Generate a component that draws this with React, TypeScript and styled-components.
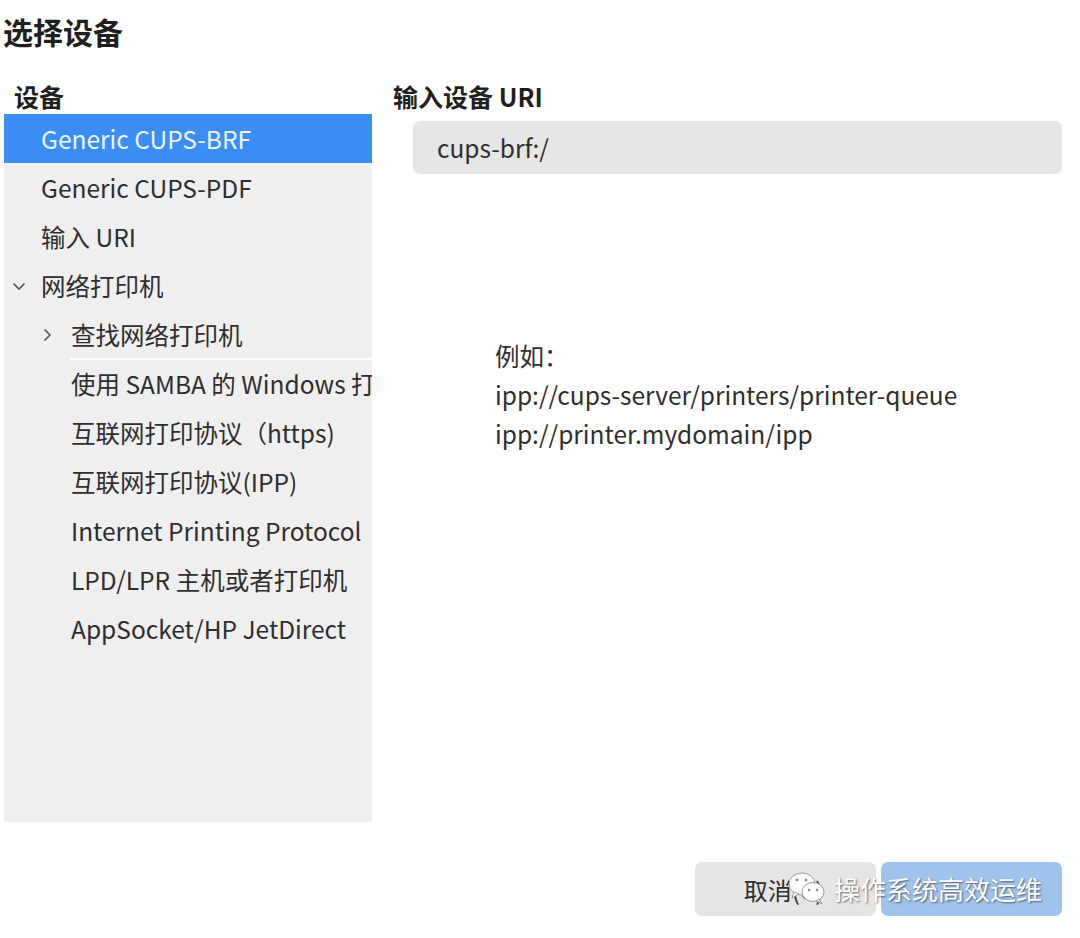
import * as React from "react";
import styled, { createGlobalStyle } from "styled-components";

const GlobalStyle = createGlobalStyle`
    html, body {
        margin: 0;
        padding: 0;
        background: #ffffff;
    }
    body {
        font-family: "Noto Sans CJK SC", "Noto Sans", sans-serif;
        color: #2e2e2e;
    }
`;

const Window = styled.div`
    width: 1080px;
    height: 938px;
    box-sizing: border-box;
    padding: 9px 18px 0 3px;
    display: flex;
    flex-direction: column;
    position: relative;
`;

const Title = styled.h1`
    margin: 0;
    font-size: 30px;
    font-weight: 700;
    line-height: 44px;
    color: #1f1f1f;
`;

const Body = styled.div`
    display: grid;
    grid-template-columns: 368px 1fr;
    column-gap: 21px;
    margin-top: 26px;
    margin-left: 1px;
`;

const Column = styled.div`
    display: flex;
    flex-direction: column;
`;

const SectionLabel = styled.div<{ $indent?: number }>`
    font-size: 25px;
    font-weight: 700;
    line-height: 35px;
    padding-left: ${(p) => p.$indent ?? 0}px;
    color: #1f1f1f;
`;

const ListPanel = styled.div`
    background: #efefef;
    height: 708px;
    overflow: hidden;
    display: flex;
    flex-direction: column;
`;

const Row = styled.div<{ $selected?: boolean; $depth: number }>`
    height: 49px;
    flex: none;
    display: flex;
    align-items: center;
    padding-left: ${(p) => 8 + p.$depth * 30}px;
    font-size: 24.5px;
    white-space: nowrap;
    background: ${(p) => (p.$selected ? "#3a8ef6" : "transparent")};
    color: ${(p) => (p.$selected ? "#eef5ff" : "#2e2e2e")};
`;

const Expander = styled.span`
    width: 29px;
    flex: none;
    display: flex;
    align-items: center;
    color: #555;
`;

const Separator = styled.div`
    height: 2px;
    flex: none;
    margin-left: 66px;
    background: #ffffff;
    margin-top: -1px;
    margin-bottom: -1px;
`;

const UriField = styled.div`
    margin: 7px 0 0 20px;
    height: 53px;
    border-radius: 7px;
    background: #e6e6e6;
    display: flex;
    align-items: center;
    padding-left: 24px;
    font-size: 24.5px;
    color: #2e2e2e;
`;

const Example = styled.div`
    margin: 162px 0 0 102px;
    font-size: 24.5px;
    line-height: 39px;
    color: #2e2e2e;
`;

const ButtonBar = styled.div`
    margin-top: 40px;
    display: flex;
    justify-content: flex-end;
    gap: 5px;
`;

const DialogButton = styled.button<{ $primary?: boolean }>`
    width: 181px;
    height: 54px;
    border: none;
    border-radius: 7px;
    font-family: inherit;
    font-size: 24px;
    padding-right: 10px;
    background: ${(p) => (p.$primary ? "#9ec4ee" : "#e5e5e5")};
    color: ${(p) => (p.$primary ? "#ffffff" : "#2e2e2e")};
`;

const Watermark = styled.div`
    position: absolute;
    left: 786px;
    top: 870px;
    display: flex;
    align-items: center;
    gap: 4px;
    font-size: 26px;
    color: #ffffff;
    text-shadow: 1px 1px 2px rgba(0, 0, 0, 0.55);
`;

const ChevronDown = () => (
    <svg width="14" height="10" viewBox="0 0 14 10">
        <path d="M1.5 2.5 L7 8 L12.5 2.5" fill="none" stroke="currentColor" strokeWidth="1.6" />
    </svg>
);

const ChevronRight = () => (
    <svg width="10" height="14" viewBox="0 0 10 14">
        <path d="M2.5 1.5 L8 7 L2.5 12.5" fill="none" stroke="currentColor" strokeWidth="1.6" />
    </svg>
);

const WeChatIcon = () => (
    <svg width="44" height="36" viewBox="0 0 44 36">
        <g stroke="#9a9a9a" strokeWidth="1" fill="#ffffff">
            <ellipse cx="16" cy="13" rx="13" ry="11" />
            <path d="M8 21 L6 27 L13 23 Z" />
            <ellipse cx="27" cy="21" rx="11" ry="9.5" />
            <path d="M33 28 L36 33 L30 29.5 Z" />
        </g>
        <circle cx="11" cy="9" r="1.4" fill="#8a8a8a" />
        <circle cx="20" cy="9" r="1.4" fill="#8a8a8a" />
        <circle cx="23" cy="19" r="1.3" fill="#8a8a8a" />
        <circle cx="31" cy="19" r="1.3" fill="#8a8a8a" />
    </svg>
);

type Item = { label: string; depth: number; expander?: "down" | "right"; selected?: boolean; sepAfter?: boolean };

const items: Item[] = [
    { label: "Generic CUPS-BRF", depth: 0, selected: true },
    { label: "Generic CUPS-PDF", depth: 0 },
    { label: "输入 URI", depth: 0 },
    { label: "网络打印机", depth: 0, expander: "down" },
    { label: "查找网络打印机", depth: 1, expander: "right", sepAfter: true },
    { label: "使用 SAMBA 的 Windows 打印机", depth: 1 },
    { label: "互联网打印协议（https)", depth: 1 },
    { label: "互联网打印协议(IPP)", depth: 1 },
    { label: "Internet Printing Protocol", depth: 1 },
    { label: "LPD/LPR 主机或者打印机", depth: 1 },
    { label: "AppSocket/HP JetDirect", depth: 1 },
];

const App = (): JSX.Element => {
    return (
        <>
            <GlobalStyle />
            <Window>
                <Title>选择设备</Title>
                <Body>
                    <Column>
                        <SectionLabel $indent={10}>设备</SectionLabel>
                        <ListPanel>
                            {items.map((it) => (
                                <React.Fragment key={it.label}>
                                    <Row $depth={it.depth} $selected={it.selected}>
                                        <Expander>
                                            {it.expander === "down" && <ChevronDown />}
                                            {it.expander === "right" && <ChevronRight />}
                                        </Expander>
                                        {it.label}
                                    </Row>
                                    {it.sepAfter && <Separator />}
                                </React.Fragment>
                            ))}
                        </ListPanel>
                    </Column>
                    <Column>
                        <SectionLabel>输入设备 URI</SectionLabel>
                        <UriField>cups-brf:/</UriField>
                        <Example>
                            例如：<br />
                            ipp://cups-server/printers/printer-queue<br />
                            ipp://printer.mydomain/ipp
                        </Example>
                    </Column>
                </Body>
                <ButtonBar>
                    <DialogButton>取消(C)</DialogButton>
                    <DialogButton $primary></DialogButton>
                </ButtonBar>
                <Watermark>
                    <WeChatIcon />
                    操作系统高效运维
                </Watermark>
            </Window>
        </>
    );
};

export default App;
